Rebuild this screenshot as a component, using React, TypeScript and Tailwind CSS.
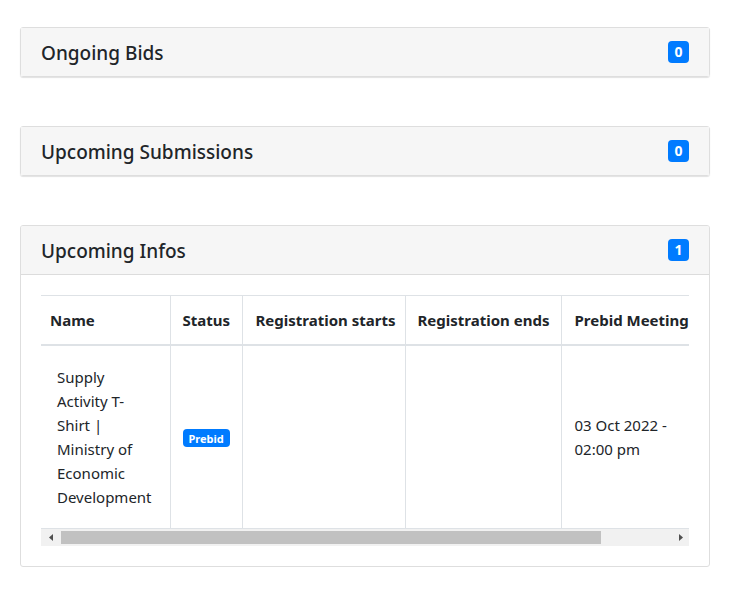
import React from "react";

const font = { fontFamily: '"Noto Sans", "Open Sans", sans-serif' };

function Badge({ n }: { n: number }) {
  return (
    <span className="inline-flex h-[22px] w-[21px] items-center justify-center rounded-[4px] bg-[#007bff] text-[14px] font-bold leading-none text-white">
      {n}
    </span>
  );
}

function CardHeader({ title, n, bordered }: { title: string; n: number; bordered?: boolean }) {
  return (
    <div
      className={
        "flex items-center justify-between bg-[#f6f6f6] pl-[20px] pr-[20px] " +
        (bordered ? "h-[49px] border-b border-[#dcdcdc]" : "h-[48px]")
      }
    >
      <span className="pt-[2px] text-[19px] font-medium text-[#212529]">{title}</span>
      <Badge n={n} />
    </div>
  );
}

export default function App() {
  return (
    <div style={font} className="min-h-[613px] w-[732px] bg-white pl-[20px] pt-[27px]">
      <div className="w-[690px] rounded-[3px] border border-[#dedede] shadow-[0_1px_1px_rgba(0,0,0,0.12)]">
        <CardHeader title="Ongoing Bids" n={0} />
      </div>
      <div className="mt-[49px] w-[690px] rounded-[3px] border border-[#dedede] shadow-[0_1px_1px_rgba(0,0,0,0.12)]">
        <CardHeader title="Upcoming Submissions" n={0} />
      </div>
      <div className="mt-[49px] w-[690px] overflow-hidden rounded-[3px] border border-[#dedede]">
        <CardHeader title="Upcoming Infos" n={1} bordered />
        <div className="px-[20px] pb-[20px] pt-[20px]">
          <div className="w-[648px] overflow-hidden">
            <table className="table-fixed border-collapse text-[#212529]" style={{ width: 760 }}>
              <colgroup>
                <col style={{ width: 129 }} />
                <col style={{ width: 72 }} />
                <col style={{ width: 163 }} />
                <col style={{ width: 156 }} />
                <col style={{ width: 240 }} />
              </colgroup>
              <thead>
                <tr className="h-[49px] border-t border-b-2 border-[#dee2e6] text-left text-[15px] font-bold">
                  <th className="pl-[9px] font-bold">Name</th>
                  <th className="border-l border-[#dee2e6] pl-[12px] font-bold">Status</th>
                  <th className="border-l border-[#dee2e6] pl-[13px] font-bold whitespace-nowrap">Registration starts</th>
                  <th className="border-l border-[#dee2e6] pl-[12px] font-bold whitespace-nowrap">Registration ends</th>
                  <th className="border-l border-[#dee2e6] pl-[13px] font-bold whitespace-nowrap">Prebid Meeting</th>
                </tr>
              </thead>
              <tbody>
                <tr className="h-[184px] border-b border-[#dee2e6] align-middle text-[15px] leading-[24px]">
                  <td className="pl-[16px] pr-[17px]">
                    Supply Activity T-Shirt | Ministry of Economic Development
                  </td>
                  <td className="border-l border-[#dee2e6] pl-[12px]">
                    <span className="inline-flex h-[18px] items-center rounded-[4px] bg-[#007bff] px-[6px] text-[11px] font-bold leading-none text-white">
                      Prebid
                    </span>
                  </td>
                  <td className="border-l border-[#dee2e6]"></td>
                  <td className="border-l border-[#dee2e6]"></td>
                  <td className="border-l border-[#dee2e6] pl-[13px] pr-[110px]">03 Oct 2022 - 02:00 pm</td>
                </tr>
              </tbody>
            </table>
          </div>
          <div className="flex h-[17px] w-[648px] items-center bg-[#f1f1f1]">
            <div className="flex w-[20px] items-center justify-center">
              <svg width="4" height="7" viewBox="0 0 4 7"><path d="M4 0L0 3.5L4 7Z" fill="#505050" /></svg>
            </div>
            <div className="h-[13px] w-[540px] bg-[#c1c1c1]"></div>
            <div className="flex-1"></div>
            <div className="flex w-[17px] items-center justify-center">
              <svg width="4" height="7" viewBox="0 0 4 7"><path d="M0 0L4 3.5L0 7Z" fill="#505050" /></svg>
            </div>
          </div>
        </div>
      </div>
    </div>
  );
}
